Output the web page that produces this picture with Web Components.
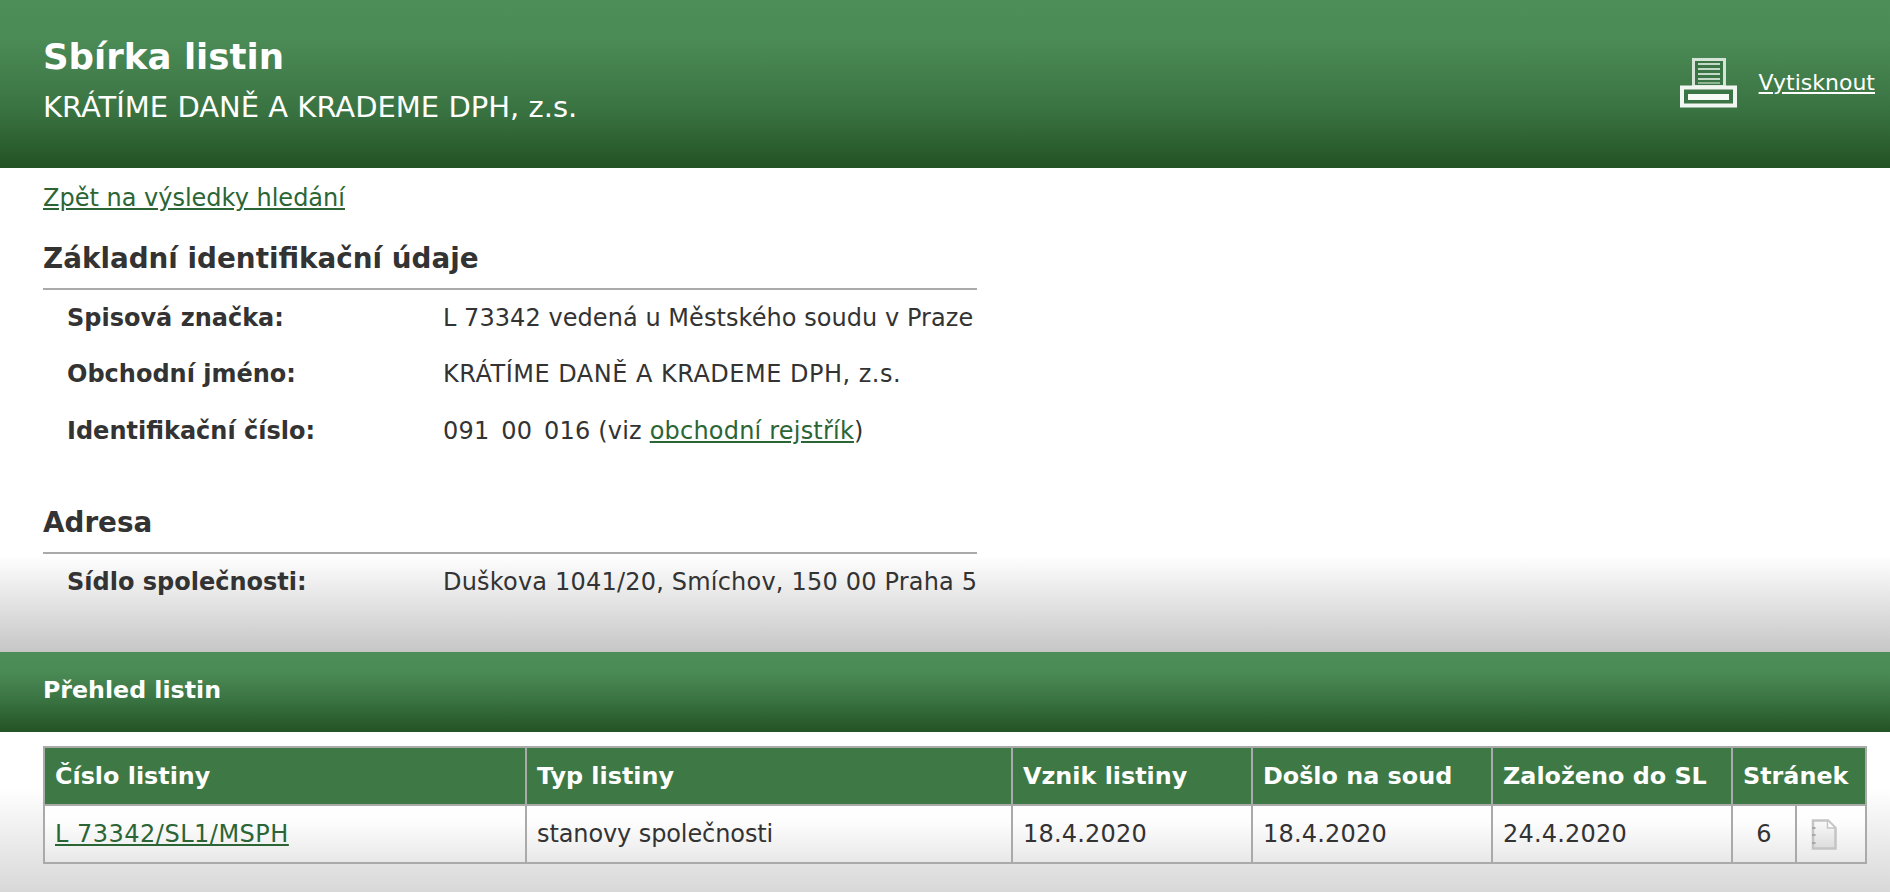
<!DOCTYPE html>
<html lang="cs">
<head>
<meta charset="utf-8">
<title>Sbírka listin</title>
<style>
  html, body { margin: 0; padding: 0; }
  body {
    font-family: "DejaVu Sans", Verdana, sans-serif;
    color: #333;
    background: #ddd;
    height: 892px;
    overflow: hidden;
  }
</style>
</head>
<body>
<page-header title-text="Sbírka listin" subtitle="KRÁTÍME DANĚ A KRADEME DPH, z.s."></page-header>
<detail-section>
  <a slot="back" href="#">Zpět na výsledky hledání</a>
  <info-group heading="Základní identifikační údaje">
    <info-row label="Spisová značka:" style="--track:.06px">L 73342 vedená u Městského soudu v Praze</info-row>
    <info-row label="Obchodní jméno:" style="--track:.5px">KRÁTÍME DANĚ A KRADEME DPH, z.s.</info-row>
    <info-row label="Identifikační číslo:" style="--track:.2px"><span style="word-spacing:4px">091 00 016</span> (viz <ext-link>obchodní rejstřík</ext-link>)</info-row>
  </info-group>
  <info-group heading="Adresa" class="last">
    <info-row label="Sídlo společnosti:" style="--track:.2px">Duškova 1041/20, Smíchov, 150 00 Praha 5</info-row>
  </info-group>
</detail-section>
<section-bar>Přehled listin</section-bar>
<listing-panel>
  <listing-table></listing-table>
</listing-panel>

<script>
// green header with the print link
class PageHeader extends HTMLElement {
  constructor () {
    super();
    const root = this.attachShadow({mode: 'open'});
    root.innerHTML = `
      <style>
      :host {
        display: flex;
        justify-content: space-between;
        align-items: flex-start;
        height: 168px;
        box-sizing: border-box;
        padding: 33px 15px 0 43px;
        color: #fff;
        background: linear-gradient(#4d8d58 0%, #4a8a55 25%, #3a7342 65%, #235225 100%);
      }
      h1 { margin: 0; font-size: 35.6px; line-height: 48px; font-weight: bold; }
      p { margin: 8px 0 0; font-size: 29px; line-height: 36px; }
      .print { display: flex; align-items: center; gap: 22px; margin-top: 25px; }
      a { color: #fff; font-size: 22px; margin-bottom: 2px; }
      svg { display: block; filter: blur(.5px); }
      </style>
      <div>
        <h1></h1>
        <p></p>
      </div>
      <div class="print">
        <svg width="57" height="50" viewBox="0 0 57 50">
          <rect x="13.5" y="1.5" width="31" height="27" fill="#3b7545" stroke="#d5e4d7" stroke-width="3"/>
          <path d="M18 6h22M18 11h22M18 16h22M18 21h22" stroke="#c3d8c6" stroke-width="2"/>
          <path d="M18 25h22" stroke="#8fb596" stroke-width="2"/>
          <rect x="2" y="29.5" width="53" height="18" fill="#3b7545" stroke="#f2f6f2" stroke-width="4"/>
          <rect x="8" y="36" width="41" height="6" fill="#f6f9f6"/>
        </svg>
        <a href="#">Vytisknout</a>
      </div>
    `;
    root.querySelector('h1').textContent = this.getAttribute('title-text');
    root.querySelector('p').textContent = this.getAttribute('subtitle');
  }
}
customElements.define('page-header', PageHeader);

// white to grey area with the identification data
class DetailSection extends HTMLElement {
  constructor () {
    super();
    this.attachShadow({mode: 'open'}).innerHTML = `
      <style>
      :host {
        display: block;
        height: 484px;
        box-sizing: border-box;
        padding: 16px 0 0 43px;
        background: linear-gradient(#fff 0%, #fff 80%, #c6c6c6 100%);
      }
      ::slotted(a) {
        display: block;
        width: fit-content;
        color: #2b6535;
        font-size: 24px;
        line-height: 28px;
      }
      </style>
      <slot name="back"></slot>
      <slot></slot>
    `;
  }
}
customElements.define('detail-section', DetailSection);

class InfoGroup extends HTMLElement {
  constructor () {
    super();
    const root = this.attachShadow({mode: 'open'});
    root.innerHTML = `
      <style>
      :host { display: block; width: 934px; margin-top: 29px; }
      :host(.last) { margin-top: 39.5px; }
      h2 {
        margin: 0 0 7px;
        font-size: 27.8px;
        line-height: 36px;
        font-weight: bold;
        border-bottom: 2px solid #aaa;
        padding-bottom: 11px;
        color: #333;
      }
      </style>
      <h2></h2>
      <slot></slot>
    `;
    root.querySelector('h2').textContent = this.getAttribute('heading');
  }
}
customElements.define('info-group', InfoGroup);

class InfoRow extends HTMLElement {
  constructor () {
    super();
    const root = this.attachShadow({mode: 'open'});
    root.innerHTML = `
      <style>
      :host {
        display: grid;
        grid-template-columns: 376px 1fr;
        height: 56.25px;
        padding-left: 24px;
        font-size: 24px;
        line-height: 42px;
        white-space: nowrap;
      }
      b { font-weight: bold; }
      span { letter-spacing: var(--track, 0); }
      </style>
      <b></b>
      <span><slot></slot></span>
    `;
    root.querySelector('b').textContent = this.getAttribute('label');
  }
}
customElements.define('info-row', InfoRow);

class ExtLink extends HTMLElement {
  constructor () {
    super();
    this.attachShadow({mode: 'open'}).innerHTML =
      '<style>a { color: #2b6535; }</style><a href="#"><slot></slot></a>';
  }
}
customElements.define('ext-link', ExtLink);

class SectionBar extends HTMLElement {
  constructor () {
    super();
    this.attachShadow({mode: 'open'}).innerHTML = `
      <style>
      :host {
        display: flex;
        align-items: center;
        height: 80px;
        box-sizing: border-box;
        padding: 0 43px 4px;
        color: #fff;
        font-size: 23.7px;
        font-weight: bold;
        background: linear-gradient(#4d8d58 0%, #4a8a55 25%, #3a7342 60%, #235225 100%);
      }
      </style>
      <slot></slot>
    `;
  }
}
customElements.define('section-bar', SectionBar);

class ListingPanel extends HTMLElement {
  constructor () {
    super();
    this.attachShadow({mode: 'open'}).innerHTML = `
      <style>
      :host {
        display: block;
        height: 160px;
        box-sizing: border-box;
        padding: 14px 22px 0 43px;
        background: linear-gradient(#fff 0%, #fff 35%, #d8d8d8 100%);
      }
      </style>
      <slot></slot>
    `;
  }
}
customElements.define('listing-panel', ListingPanel);

class ListingTable extends HTMLElement {
  constructor () {
    super();
    this.attachShadow({mode: 'open'}).innerHTML = `
      <style>
      :host { display: block; }
      table {
        border-collapse: collapse;
        table-layout: fixed;
        width: 1824px;
        font-size: 24px;
        border: 2px solid #aaa;
      }
      th, td {
        border: 2px solid #aaa;
        padding: 0 10px;
        text-align: left;
        height: 58px;
        box-sizing: border-box;
        white-space: nowrap;
      }
      th { background: #3e7945; color: #fff; font-weight: bold; font-size: 23.85px; }
      td { background: linear-gradient(#fff 0%, #fdfdfd 30%, #e8e8e8 100%); letter-spacing: .2px; }
      a { color: #2b6535; letter-spacing: .5px; }
      .pages { text-align: center; }
      .doc { padding: 0 0 0 14px; }
      svg { display: block; filter: blur(.6px); }
      </style>
      <table>
        <colgroup>
          <col style="width:482px"><col style="width:486px"><col style="width:240px">
          <col style="width:240px"><col style="width:240px"><col style="width:64px"><col style="width:70px">
        </colgroup>
        <thead>
          <tr>
            <th>Číslo listiny</th><th>Typ listiny</th><th>Vznik listiny</th>
            <th>Došlo na soud</th><th>Založeno do SL</th><th colspan="2">Stránek</th>
          </tr>
        </thead>
        <tbody>
          <tr>
            <td><a href="#">L 73342/SL1/MSPH</a></td>
            <td style="letter-spacing:-.1px">stanovy společnosti</td>
            <td>18.4.2020</td>
            <td>18.4.2020</td>
            <td>24.4.2020</td>
            <td class="pages">6</td>
            <td class="doc">
              <svg width="26" height="31" viewBox="0 0 26 31">
                <defs>
                  <linearGradient id="sheet" x1="0" y1="0" x2="0" y2="1">
                    <stop offset="0" stop-color="#fafafa"/>
                    <stop offset="1" stop-color="#dcdcdc"/>
                  </linearGradient>
                </defs>
                <path d="M2 1.5h15l7.5 7.5v20.5H2z" fill="url(#sheet)" stroke="#c4c4c4" stroke-width="2.5"/>
                <path d="M16.5 2v7h7" fill="#fff" stroke="#c4c4c4" stroke-width="1.5"/>
                <path d="M1 9h3.5M1 16h3.5M1 24h3.5" stroke="#a8a8a8" stroke-width="2"/>
              </svg>
            </td>
          </tr>
        </tbody>
      </table>
    `;
  }
}
customElements.define('listing-table', ListingTable);
</script>
</body>
</html>
